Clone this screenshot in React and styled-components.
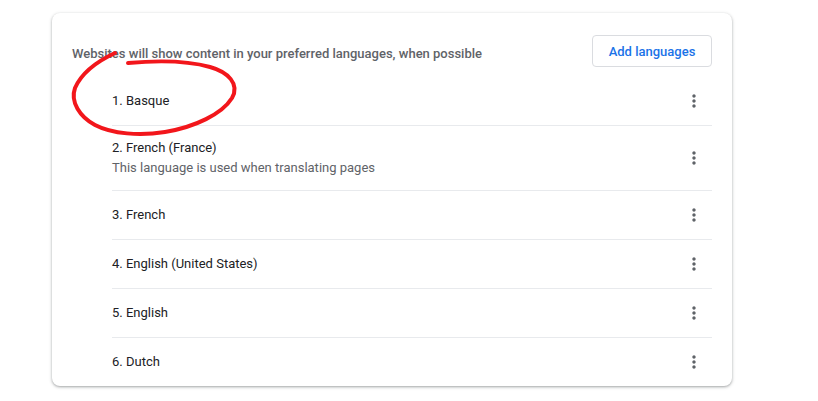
import React from "react";
import styled, { createGlobalStyle } from "styled-components";

const Global = createGlobalStyle`
  html, body { margin: 0; padding: 0; background: #fff; }
  body { font-family: Roboto, "Liberation Sans", sans-serif; }
`;

const Page = styled.div`
  position: relative;
  width: 818px;
  height: 401px;
  padding: 13px 0 0 52px;
  box-sizing: border-box;
`;

const Card = styled.div`
  width: 680px;
  box-sizing: border-box;
  padding: 0 20px;
  background: #fff;
  border-radius: 8px;
  box-shadow: 0 1px 2px 0 rgba(60, 64, 67, 0.3), 0 1px 3px 1px rgba(60, 64, 67, 0.15);
`;

const Header = styled.div`
  display: flex;
  align-items: flex-start;
  justify-content: space-between;
  padding: 22px 0 10px;
`;

const HeaderText = styled.div`
  margin-top: 9px;
  font-size: 13px;
  line-height: 20px;
  font-weight: 500;
  color: #5f6368;
`;

const Button = styled.button`
  height: 32px;
  width: 120px;
  padding: 0;
  box-sizing: border-box;
  white-space: nowrap;
  background: #fff;
  border: 1px solid #dadce0;
  border-radius: 4px;
  font-family: Roboto, "Liberation Sans", sans-serif;
  font-size: 13px;
  font-weight: 500;
  color: #1a73e8;
  cursor: pointer;
`;

const List = styled.div`
  margin-left: 40px;
`;

const Row = styled.div`
  display: flex;
  align-items: center;
  min-height: ${(p) => (p.$tall ? "40px" : "48px")};
  padding: ${(p) => (p.$tall ? "12px 8px 12px 0" : "0 8px 0 0")};
  box-sizing: content-box;
  border-top: ${(p) => (p.$first ? "none" : "1px solid #e8eaed")};
`;

const RowText = styled.div`
  flex: 1;
  display: flex;
  flex-direction: column;
`;

const Title = styled.div`
  font-size: 13px;
  line-height: 20px;
  color: #202124;
`;

const Sub = styled.div`
  font-size: 13px;
  line-height: 20px;
  color: #5f6368;
`;

const Kebab = styled.svg`
  width: 20px;
  height: 20px;
  fill: #5f6368;
  flex: none;
`;

const Annotation = styled.svg`
  position: absolute;
  left: 0;
  top: 0;
  pointer-events: none;
`;

const MoreVert = () => (
  <Kebab viewBox="0 0 24 24">
    <path d="M12 8c1.1 0 2-.9 2-2s-.9-2-2-2-2 .9-2 2 .9 2 2 2zm0 2c-1.1 0-2 .9-2 2s.9 2 2 2 2-.9 2-2-.9-2-2-2zm0 6c-1.1 0-2 .9-2 2s.9 2 2 2 2-.9 2-2-.9-2-2-2z" />
  </Kebab>
);

const langs = [
  { name: "1. Basque" },
  { name: "2. French (France)", sub: "This language is used when translating pages" },
  { name: "3. French" },
  { name: "4. English (United States)" },
  { name: "5. English" },
  { name: "6. Dutch" },
];

export default function App() {
  return (
    <>
      <Global />
      <Page>
        <Card>
          <Header>
            <HeaderText>Websites will show content in your preferred languages, when possible</HeaderText>
            <Button>Add languages</Button>
          </Header>
          <List>
            {langs.map((l, i) => (
              <Row key={l.name} $first={i === 0} $tall={!!l.sub}>
                <RowText>
                  <Title>{l.name}</Title>
                  {l.sub && <Sub>{l.sub}</Sub>}
                </RowText>
                <MoreVert />
              </Row>
            ))}
          </List>
        </Card>
        <Annotation width="818" height="401" viewBox="0 0 818 401">
          <path
            d="M115,53 C100,60 82,72 75,88 C70,102 80,117 95,125 C112,134 140,136 165,132 C195,127 222,114 232,98 C240,84 228,72 210,67 C185,60 150,61 128,63"
            fill="none"
            stroke="#f2161b"
            strokeWidth="4"
            strokeLinecap="round"
            strokeLinejoin="round"
          />
        </Annotation>
      </Page>
    </>
  );
}
